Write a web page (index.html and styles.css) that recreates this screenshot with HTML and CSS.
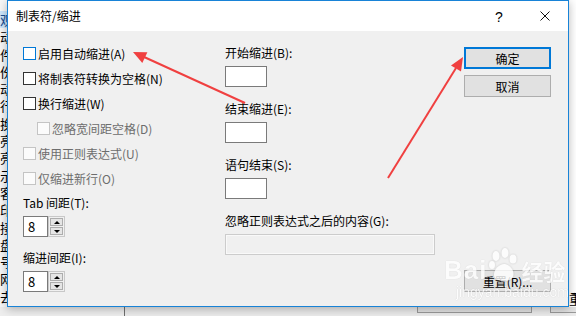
FILE: index.html
```html
<!DOCTYPE html>
<html lang="zh-CN">
<head>
    <meta charset="UTF-8">
    <meta name="viewport" content="width=device-width, initial-scale=1.0">
    <title>制表符/缩进</title>
    <link rel="stylesheet" href="styles.css">
</head>
<body>
    <div class="desk">
        <!-- 后面的编辑器窗口 -->
        <div class="backdrop">
            <div class="back-top">
                <div class="side-list">
                    <div class="sel">观</div>
                    <div>动</div>
                    <div>件</div>
                    <div>份</div>
                    <div>动</div>
                    <div>行</div>
                    <div>换</div>
                    <div>亮</div>
                    <div>亮</div>
                    <div>示</div>
                    <div>客</div>
                    <div>印</div>
                    <div>接</div>
                    <div>盘</div>
                    <div>号</div>
                    <div>网</div>
                    <div>去</div>
                </div>
                <div class="back-main">
                    <span class="back-char">重</span>
                </div>
            </div>
            <div class="back-bottom">
                <div class="bb-left"></div>
                <div class="bb-gap"></div>
                <div class="bb-box"></div>
                <div class="bb-gap2"></div>
                <div class="bb-box last"></div>
            </div>
        </div>

        <!-- 对话框 -->
        <div class="dialog">
            <div class="titlebar">
                <span class="title">制表符/缩进</span>
                <span class="tb-btn help">?</span>
                <span class="tb-btn">
                    <svg width="10" height="10" viewBox="0 0 10 10">
                        <path d="M0.5 0.5 L9.5 9.5 M9.5 0.5 L0.5 9.5" stroke="#111" stroke-width="1" fill="none"/>
                    </svg>
                </span>
            </div>

            <div class="dlg-body">
                <div class="col-opts">
                    <label class="opt"><span class="chk focus"></span>启用自动缩进(A)</label>
                    <label class="opt"><span class="chk"></span>将制表符转换为空格(N)</label>
                    <label class="opt"><span class="chk"></span>换行缩进(W)</label>
                    <label class="opt sub off"><span class="chk"></span>忽略宽间距空格(D)</label>
                    <label class="opt off"><span class="chk"></span>使用正则表达式(U)</label>
                    <label class="opt off"><span class="chk"></span>仅缩进新行(O)</label>

                    <div class="lbl first">Tab 间距(T):</div>
                    <div class="spin">
                        <div class="spin-val">8</div>
                        <div class="spin-btns">
                            <span class="up"></span>
                            <span class="down"></span>
                        </div>
                    </div>

                    <div class="lbl">缩进间距(I):</div>
                    <div class="spin">
                        <div class="spin-val">8</div>
                        <div class="spin-btns">
                            <span class="up"></span>
                            <span class="down"></span>
                        </div>
                    </div>
                </div>

                <div class="col-fields">
                    <div class="field">
                        <div class="lbl">开始缩进(B):</div>
                        <div class="box"></div>
                    </div>
                    <div class="field">
                        <div class="lbl">结束缩进(E):</div>
                        <div class="box"></div>
                    </div>
                    <div class="field">
                        <div class="lbl">语句结束(S):</div>
                        <div class="box"></div>
                    </div>
                    <div class="field">
                        <div class="lbl">忽略正则表达式之后的内容(G):</div>
                        <div class="box wide"></div>
                    </div>
                </div>

                <div class="col-btns">
                    <button class="btn default">确定</button>
                    <button class="btn">取消</button>
                    <button class="btn reset">重置(R)...</button>
                </div>
            </div>
        </div>

        <!-- 红色箭头 -->
        <svg class="marks" width="576" height="316" viewBox="0 0 576 316">
            <line x1="245" y1="103" x2="143" y2="56.5" stroke="#f04040" stroke-width="2"/>
            <polygon points="133,52 147.4,52.2 142.3,63" fill="#f04040"/>
            <line x1="388" y1="178" x2="456" y2="68" stroke="#f04040" stroke-width="2"/>
            <polygon points="463,57 461,71.5 451,65.5" fill="#f04040"/>
        </svg>

        <!-- 水印 -->
        <div class="watermark">
            <div class="wm-row">
                <span class="wm-bai">Bai</span>
                <svg class="wm-paw" width="30" height="34" viewBox="0 0 30 34">
                    <ellipse cx="7" cy="8" rx="3.5" ry="5" fill="#fff"/>
                    <ellipse cx="16" cy="5" rx="3.5" ry="5" fill="#fff"/>
                    <ellipse cx="24" cy="11" rx="3.5" ry="4.5" fill="#fff"/>
                    <ellipse cx="3" cy="17" rx="3" ry="4" fill="#fff"/>
                    <path d="M6 30 C2 24 10 15 16 16 C22 17 28 26 22 31 C18 34 10 34 6 30 Z" fill="#fff"/>
                </svg>
                <span class="wm-jy">经验</span>
            </div>
            <div class="wm-url">jingyan.baidu.com</div>
        </div>
    </div>
</body>
</html>
```

FILE: styles.css
```css
body {
    margin: 0;
    font-family: "Noto Sans CJK SC", "Noto Sans", sans-serif;
    font-size: 12px;
    color: #000;
}
.desk {
    position: relative;
    width: 576px;
    height: 316px;
    overflow: hidden;
    background-color: #fff;
}

/* 后面的窗口 */
.backdrop {
    display: flex;
    flex-direction: column;
    height: 316px;
}
.back-top {
    display: flex;
    height: 307px;
}
.side-list {
    width: 7px;
    overflow: hidden;
    padding-top: 11px;
    background-color: #f7f7f7;
    font-size: 13px;
    line-height: 17.3px;
    white-space: nowrap;
}
.side-list .sel {
    background-color: #cde6fb;
    color: #1d4f91;
}
.back-main {
    flex: 1;
    display: flex;
    justify-content: flex-end;
    align-items: flex-end;
    background-color: #fff;
}
.back-char {
    font-size: 13px;
    line-height: 14px;
    margin-right: -6px;
    margin-bottom: 1px;
}
.back-bottom {
    flex: 1;
    display: flex;
    background-color: #ebebeb;
}
.bb-left {
    width: 124px;
    border-right: 1px solid #6f6f6f;
    background-color: #eeeeee;
}
.bb-gap {
    width: 292px;
}
.bb-box {
    width: 113px;
    height: 5px;
    border: 1px solid #9a9a9a;
    border-top: none;
    background-color: #e2e2e2;
}
.bb-gap2 {
    width: 18px;
}
.bb-box.last {
    flex: 1;
    border-right: none;
}

/* 对话框 */
.dialog {
    position: absolute;
    left: 7px;
    top: 0;
    width: 562px;
    height: 307px;
    box-sizing: border-box;
    border: 1px solid #1883d7;
    background-color: #f0f0f0;
    box-shadow: 0 2px 9px rgba(0, 0, 0, 0.28);
    display: flex;
    flex-direction: column;
}
.titlebar {
    height: 30px;
    display: flex;
    align-items: center;
    background-color: #fff;
    padding-left: 8px;
}
.title {
    flex: 1;
    font-size: 12px;
    line-height: 16px;
}
.tb-btn {
    width: 46px;
    height: 30px;
    display: flex;
    align-items: center;
    justify-content: center;
}
.tb-btn.help {
    font-family: "Liberation Sans", sans-serif;
    font-size: 14px;
    padding-top: 1px;
    box-sizing: border-box;
}

.dlg-body {
    flex: 1;
    display: grid;
    grid-template-columns: 202px 239px 87px;
    padding-left: 15px;
}

/* 左列 */
.col-opts {
    padding-top: 10px;
}
.opt {
    height: 25px;
    display: flex;
    align-items: center;
    gap: 2px;
    line-height: 16px;
}
.chk {
    width: 13px;
    height: 13px;
    box-sizing: border-box;
    border: 1px solid #333;
    background-color: #fff;
}
.chk.focus {
    border-color: #0078d7;
}
.opt.sub {
    margin-left: 14px;
}
.opt.off {
    color: #6d6d6d;
}
.opt.off .chk {
    border-color: #c4c4c4;
    background-color: #fbfbfb;
}
.lbl {
    line-height: 20px;
    margin-top: 11px;
    margin-bottom: 3px;
}
.lbl.first {
    margin-top: 2px;
}
.spin {
    display: flex;
    width: 42px;
    height: 21px;
}
.spin-val {
    width: 25px;
    box-sizing: border-box;
    border: 1px solid #7a7a7a;
    background-color: #fff;
    padding-left: 4px;
    line-height: 19px;
    font-size: 13px;
}
.spin-btns {
    width: 17px;
    box-sizing: border-box;
    border: 1px solid #c8c8c8;
    display: flex;
    flex-direction: column;
    gap: 1px;
    padding: 1px;
    background-color: #f0f0f0;
}
.spin-btns span {
    flex: 1;
    border: 1px solid #adadad;
    background-color: #e5e5e5;
    display: flex;
    align-items: center;
    justify-content: center;
}
.spin-btns .up::before {
    content: "";
    border-left: 3px solid transparent;
    border-right: 3px solid transparent;
    border-bottom: 3px solid #000;
}
.spin-btns .down::before {
    content: "";
    border-left: 3px solid transparent;
    border-right: 3px solid transparent;
    border-top: 3px solid #000;
}

/* 中间列 */
.col-fields {
    padding-top: 12px;
}
.field .lbl {
    margin-top: 0;
    margin-bottom: 3px;
}
.field {
    margin-bottom: 12px;
}
.box {
    width: 42px;
    height: 21px;
    box-sizing: border-box;
    border: 1px solid #7a7a7a;
    background-color: #fff;
}
.box.wide {
    width: 210px;
    border-color: #cccccc;
    background-color: #f0f0f0;
    box-shadow: inset 0 0 0 1px #f9f9f9;
}

/* 右列按钮 */
.col-btns {
    display: flex;
    flex-direction: column;
    gap: 6px;
    padding-top: 16px;
    padding-bottom: 14px;
}
.btn {
    width: 87px;
    height: 22px;
    box-sizing: border-box;
    border: 1px solid #adadad;
    background-color: #e1e1e1;
    font-family: inherit;
    font-size: 12px;
    padding: 0;
    color: #000;
}
.btn.default {
    border: 2px solid #0078d7;
}
.btn.reset {
    margin-top: auto;
}

/* 箭头和水印 */
.marks {
    position: absolute;
    left: 0;
    top: 0;
    pointer-events: none;
}
.watermark {
    position: absolute;
    left: 444px;
    top: 246px;
    opacity: 0.8;
    pointer-events: none;
}
.wm-row {
    display: flex;
    align-items: flex-end;
    height: 38px;
}
.wm-bai {
    font-family: "Liberation Sans", sans-serif;
    font-weight: bold;
    font-size: 26px;
    line-height: 28px;
    color: #fff;
    text-shadow: 0 0 1px rgba(0, 0, 0, 0.2);
    letter-spacing: 1px;
}
.wm-paw {
    margin-left: 2px;
    margin-bottom: 2px;
    filter: drop-shadow(0 0 1px rgba(0, 0, 0, 0.2));
}
.wm-jy {
    font-size: 22px;
    line-height: 28px;
    font-weight: bold;
    color: #fff;
    text-shadow: 0 0 1px rgba(0, 0, 0, 0.2);
    margin-left: 2px;
}
.wm-url {
    font-family: "Liberation Sans", sans-serif;
    font-size: 14px;
    line-height: 16px;
    color: #fff;
    text-shadow: 0 0 1px rgba(0, 0, 0, 0.25);
    margin-left: 12px;
}
```
